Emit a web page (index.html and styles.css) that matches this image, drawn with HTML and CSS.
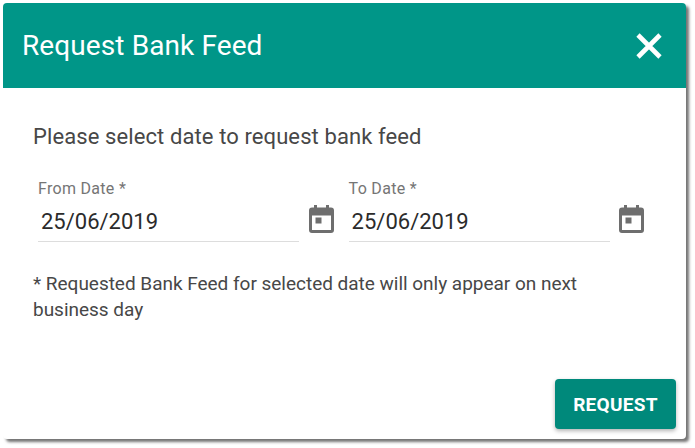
FILE: index.html
```html
<!DOCTYPE html>
<html lang="en">
<head>
<meta charset="utf-8">
<title>Request Bank Feed</title>
<link rel="stylesheet" href="styles.css">
</head>
<body>
<div class="dialog">
  <header class="header">
    <h1 class="title">Request Bank Feed</h1>
    <svg class="close" viewBox="0 0 28 28" aria-label="Close"><path d="M3 3 25 25M25 3 3 25"/></svg>
  </header>
  <main class="content">
    <p class="lead">Please select date to request bank feed</p>
    <div class="fields">
      <div class="field">
        <div class="control">
          <label class="label">From Date *</label>
          <div class="value">25/06/2019</div>
        </div>
        <svg class="cal" viewBox="0 0 25 28"><path fill-rule="evenodd" d="M5 0h3v2.500h9V0h3v2.500h2a3 3 0 0 1 3 3V25a3 3 0 0 1-3 3H3a3 3 0 0 1-3-3V5.500a3 3 0 0 1 3-3h2zM3 10.500V25h19V10.500zM6.500 12.500h6v6h-6z"/></svg>
      </div>
      <div class="field">
        <div class="control">
          <label class="label">To Date *</label>
          <div class="value">25/06/2019</div>
        </div>
        <svg class="cal" viewBox="0 0 25 28"><path fill-rule="evenodd" d="M5 0h3v2.500h9V0h3v2.500h2a3 3 0 0 1 3 3V25a3 3 0 0 1-3 3H3a3 3 0 0 1-3-3V5.500a3 3 0 0 1 3-3h2zM3 10.500V25h19V10.500zM6.500 12.500h6v6h-6z"/></svg>
      </div>
    </div>
    <p class="note">* Requested Bank Feed for selected date will only appear on next business day</p>
  </main>
  <footer class="footer">
    <button class="request">REQUEST</button>
  </footer>
</div>
</body>
</html>
```
FILE: styles.css
```css
html, body {
  margin: 0;
  padding: 0;
  background: #fff;
}
body {
  width: 695px;
  height: 448px;
  overflow: hidden;
  font-family: Roboto, "Liberation Sans", sans-serif;
}
.dialog {
  margin: 3px 0 0 3px;
  width: 683px;
  height: 436px;
  background: #fff;
  border-radius: 4px;
  box-shadow: 3px 3px 3px rgba(0, 0, 0, .55);
  display: flex;
  flex-direction: column;
}
.header {
  height: 85px;
  background: #009688;
  border-radius: 4px 4px 0 0;
  display: flex;
  align-items: center;
  justify-content: space-between;
  padding: 0 23px 0 19px;
  flex: none;
}
.title {
  margin: 0;
  font-size: 28px;
  letter-spacing: .1px;
  font-weight: 400;
  color: #fff;
}
.close {
  width: 28px;
  height: 28px;
  flex: none;
}
.close path {
  stroke: #fff;
  stroke-width: 4.6;
  fill: none;
}
.content {
  flex: 1;
  padding: 35px 30px 0;
}
.lead {
  margin: 0;
  font-size: 22px;
  letter-spacing: .1px;
  line-height: 28px;
  color: #474747;
}
.fields {
  display: flex;
  margin-top: 28px;
  padding-left: 5px;
  gap: 15px;
}
.field {
  display: flex;
  align-items: flex-end;
  justify-content: space-between;
  width: 295.600px;
}
.control {
  width: 261px;
  height: 63px;
  border-bottom: 1px solid #ddd;
  box-sizing: border-box;
}
.label {
  display: block;
  font-size: 16px;
  letter-spacing: .3px;
  line-height: 20px;
  color: #757575;
}
.value {
  padding: 8px 0 0 3px;
  font-size: 22px;
  line-height: 30px;
  color: #2b2b2b;
}
.cal {
  width: 25px;
  height: 28px;
  margin-bottom: 9px;
  fill: #6e6e6e;
  flex: none;
}
.note {
  margin: 29px 40px 0 0;
  font-size: 19px;
  letter-spacing: -.02px;
  line-height: 26px;
  color: #474747;
}
.footer {
  display: flex;
  justify-content: flex-end;
  padding: 0 10px 10px 0;
  flex: none;
}
.request {
  width: 121px;
  height: 50px;
  border: 0;
  border-radius: 4px;
  background: #00897b;
  color: #fff;
  font: 700 19px Roboto, "Liberation Sans", sans-serif;
  letter-spacing: .3px;
  box-shadow: 0 2px 4px rgba(0, 0, 0, .3);
}
```
